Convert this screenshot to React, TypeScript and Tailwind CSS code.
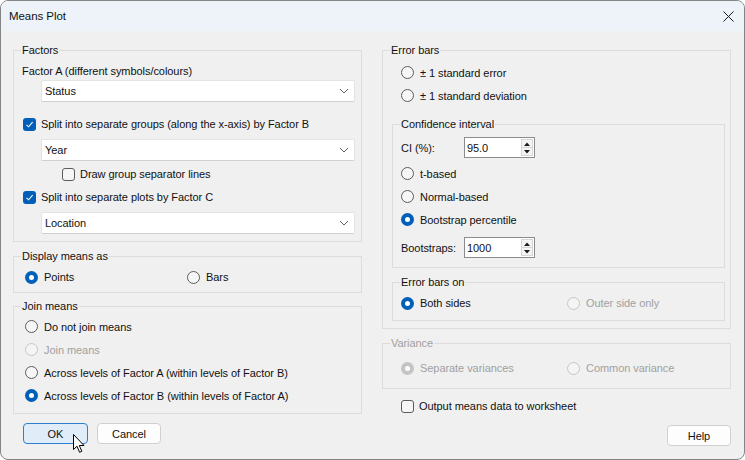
import React from 'react';

const font = "font-['Liberation_Sans',Arial,sans-serif]";

function Radio({ checked = false, disabled = false, label }: { checked?: boolean; disabled?: boolean; label: string }) {
  let dot = 'border border-[#5c5c5c] bg-[#f6f6f6]';
  if (checked && !disabled) dot = 'bg-[#005fb8]';
  if (checked && disabled) dot = 'bg-[#c4c4c4]';
  if (!checked && disabled) dot = 'border border-[#c6c6c6] bg-[#f4f4f4]';
  return (
    <div className="flex items-center h-[14px]">
      <span className={`w-[13px] h-[13px] rounded-full flex items-center justify-center shrink-0 ${dot}`}>
        {checked && <span className="w-[5px] h-[5px] rounded-full bg-white" />}
      </span>
      <span className={`ml-[6px] whitespace-nowrap ${disabled ? 'text-[#a0a0a0]' : ''}`}>{label}</span>
    </div>
  );
}

function Check({ checked = false, label }: { checked?: boolean; label: string }) {
  return (
    <div className="flex items-center h-[14px]">
      {checked ? (
        <span className="w-[13px] h-[13px] rounded-[3px] bg-[#005fb8] flex items-center justify-center shrink-0">
          <svg width="9" height="9" viewBox="0 0 9 9">
            <path d="M1.5 4.8 L3.6 6.8 L7.6 2.2" fill="none" stroke="white" strokeWidth="1.1" />
          </svg>
        </span>
      ) : (
        <span className="w-[13px] h-[13px] rounded-[3px] border border-[#5c5c5c] bg-[#f6f6f6] shrink-0" />
      )}
      <span className="ml-[5px] whitespace-nowrap">{label}</span>
    </div>
  );
}

function Select({ value }: { value: string }) {
  return (
    <div className="h-[22px] bg-white border border-[#e3e3e3] border-b-[#d0d0d0] rounded-[2px] flex items-center justify-between pl-[3px] pr-[5px]">
      <span>{value}</span>
      <svg width="10" height="6" viewBox="0 0 10 6">
        <path d="M1 1 L5 5 L9 1" fill="none" stroke="#606060" strokeWidth="1" />
      </svg>
    </div>
  );
}

function Spin({ value }: { value: string }) {
  return (
    <div className="w-[71px] h-[21px] bg-white border border-[#8c8c8c] flex items-stretch">
      <span className="flex-1 pl-[2px] flex items-center">{value}</span>
      <div className="w-[12px] my-[1px] mr-[1px] border border-[#d6d6d6] bg-[#f4f4f4] flex flex-col">
        <div className="flex-1 flex items-center justify-center border-b border-[#d6d6d6]">
          <svg width="6" height="4" viewBox="0 0 6 4"><path d="M0 4 L3 0.5 L6 4 Z" fill="#1a1a1a" /></svg>
        </div>
        <div className="flex-1 flex items-center justify-center">
          <svg width="6" height="4" viewBox="0 0 6 4"><path d="M0 0 L3 3.5 L6 0 Z" fill="#1a1a1a" /></svg>
        </div>
      </div>
    </div>
  );
}

function Group({ title, disabled = false, className = '', children }: { title: string; disabled?: boolean; className?: string; children: React.ReactNode }) {
  return (
    <fieldset className={`border border-[#dcdcdc] min-w-0 ${className}`}>
      <legend className={`ml-[7px] px-[1px] leading-[14px] ${disabled ? 'text-[#a0a0a0]' : ''}`}>{title}</legend>
      {children}
    </fieldset>
  );
}

export default function App() {
  return (
    <div className={`w-[745px] h-[460px] bg-white ${font} text-[11px] leading-[14px] tracking-[-0.06px] text-[#111]`}>
      <div className="relative w-full h-full rounded-[8px] border border-[#858585] overflow-hidden flex flex-col bg-[#f0f0f0]">
        {/* title bar */}
        <div className="h-[30px] bg-[#eef3fa] flex items-center justify-between pl-[8px] pr-[10px] shrink-0">
          <span className="text-[11.5px]">Means Plot</span>
          <svg width="11" height="11" viewBox="0 0 11 11">
            <path d="M0.5 0.5 L10.5 10.5 M10.5 0.5 L0.5 10.5" stroke="#1a1a1a" strokeWidth="1" />
          </svg>
        </div>

        <div className="flex gap-[20px] px-[12px] pt-[12px]">
          {/* left column */}
          <div className="w-[349px] flex flex-col">
            <Group title="Factors">
              <div className="flex flex-col pb-[7px]">
                <div className="mt-[7px] pl-[8px]">Factor A (different symbols/colours)</div>
                <div className="mt-[2px] ml-[27px] mr-[6px]"><Select value="Status" /></div>
                <div className="mt-[15px] pl-[9px]"><Check checked label="Split into separate groups (along the x-axis) by Factor B" /></div>
                <div className="mt-[8px] ml-[27px] mr-[6px]"><Select value="Year" /></div>
                <div className="mt-[6px] pl-[48px]"><Check label="Draw group separator lines" /></div>
                <div className="mt-[9px] pl-[9px]"><Check checked label="Split into separate plots by Factor C" /></div>
                <div className="mt-[8px] ml-[27px] mr-[6px]"><Select value="Location" /></div>
              </div>
            </Group>

            <Group title="Display means as" className="mt-[7px]">
              <div className="flex pl-[11px] pt-[7px] pb-[8px]">
                <div className="w-[162px]"><Radio checked label="Points" /></div>
                <Radio label="Bars" />
              </div>
            </Group>

            <Group title="Join means" className="mt-[6px]">
              <div className="flex flex-col pl-[11px] pt-[2px] pb-[6px]">
                <div className="h-[23px] flex items-center"><Radio label="Do not join means" /></div>
                <div className="h-[23px] flex items-center"><Radio disabled label="Join means" /></div>
                <div className="h-[23px] flex items-center"><Radio label="Across levels of Factor A (within levels of Factor B)" /></div>
                <div className="h-[23px] flex items-center"><Radio checked label="Across levels of Factor B (within levels of Factor A)" /></div>
              </div>
            </Group>

            <div className="flex gap-[9px] mt-[9px] ml-[10px]">
              <button className="w-[65px] h-[21px] rounded-[4px] border border-[#2f7fd0] bg-[#e0ecf8]">OK</button>
              <button className="w-[64px] h-[21px] rounded-[4px] border border-[#d0d0d0] bg-[#fdfdfd]">Cancel</button>
            </div>
          </div>

          {/* right column */}
          <div className="w-[349px] flex flex-col">
            <Group title="Error bars">
              <div className="flex flex-col pb-[7px]">
                <div className="flex flex-col pl-[18px] pt-[4px]">
                  <div className="h-[23px] flex items-center"><Radio label="± 1 standard error" /></div>
                  <div className="h-[23px] flex items-center"><Radio label="± 1 standard deviation" /></div>
                </div>

                <Group title="Confidence interval" className="mt-[10px] ml-[9px] mr-[5px]">
                  <div className="flex flex-col pl-[8px] pt-[6px] pb-[9px]">
                    <div className="flex items-center">
                      <span className="w-[63px]">CI (%):</span>
                      <Spin value="95.0" />
                    </div>
                    <div className="flex flex-col mt-[4px]">
                      <div className="h-[23px] flex items-center"><Radio label="t-based" /></div>
                      <div className="h-[23px] flex items-center"><Radio label="Normal-based" /></div>
                      <div className="h-[23px] flex items-center"><Radio checked label="Bootstrap percentile" /></div>
                    </div>
                    <div className="flex items-center mt-[6px]">
                      <span className="w-[63px]">Bootstraps:</span>
                      <Spin value="1000" />
                    </div>
                  </div>
                </Group>

                <Group title="Error bars on" className="mt-[7px] ml-[9px] mr-[5px]">
                  <div className="flex pl-[8px] pt-[7px] pb-[10px]">
                    <div className="w-[166px]"><Radio checked label="Both sides" /></div>
                    <Radio disabled label="Outer side only" />
                  </div>
                </Group>
              </div>
            </Group>

            <Group title="Variance" disabled className="mt-[7px]">
              <div className="flex pl-[18px] pt-[11px] pb-[13px]">
                <div className="w-[166px]"><Radio checked disabled label="Separate variances" /></div>
                <Radio disabled label="Common variance" />
              </div>
            </Group>

            <div className="mt-[10px] pl-[19px]"><Check label="Output means data to worksheet" /></div>

            <div className="flex justify-end mt-[12px]">
              <button className="w-[64px] h-[21px] rounded-[4px] border border-[#d0d0d0] bg-[#fdfdfd]">Help</button>
            </div>
          </div>
        </div>

        {/* mouse pointer over the OK button */}
        <svg className="absolute left-[72px] top-[433px]" width="13" height="20" viewBox="0 0 13 20">
          <path d="M0.5 0.5 L0.5 15.5 L4 12.2 L6.6 18.3 L8.8 17.3 L6.3 11.5 L11 11.5 Z" fill="white" stroke="black" strokeWidth="1" strokeLinejoin="round" />
        </svg>
      </div>
    </div>
  );
}
